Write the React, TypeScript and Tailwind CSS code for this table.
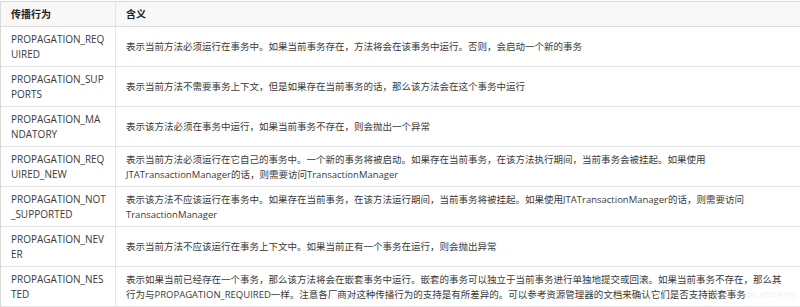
const rows: { name: string[]; desc: string[] }[] = [
    {
        name: ["PROPAGATION_REQ", "UIRED"],
        desc: ["表示当前方法必须运行在事务中。如果当前事务存在，方法将会在该事务中运行。否则，会启动一个新的事务"],
    },
    {
        name: ["PROPAGATION_SUP", "PORTS"],
        desc: ["表示当前方法不需要事务上下文，但是如果存在当前事务的话，那么该方法会在这个事务中运行"],
    },
    {
        name: ["PROPAGATION_MA", "NDATORY"],
        desc: ["表示该方法必须在事务中运行，如果当前事务不存在，则会抛出一个异常"],
    },
    {
        name: ["PROPAGATION_REQ", "UIRED_NEW"],
        desc: [
            "表示当前方法必须运行在它自己的事务中。一个新的事务将被启动。如果存在当前事务，在该方法执行期间，当前事务会被挂起。如果使用",
            "JTATransactionManager的话，则需要访问TransactionManager",
        ],
    },
    {
        name: ["PROPAGATION_NOT", "_SUPPORTED"],
        desc: [
            "表示该方法不应该运行在事务中。如果存在当前事务，在该方法运行期间，当前事务将被挂起。如果使用JTATransactionManager的话，则需要访问",
            "TransactionManager",
        ],
    },
    {
        name: ["PROPAGATION_NEV", "ER"],
        desc: ["表示当前方法不应该运行在事务上下文中。如果当前正有一个事务在运行，则会抛出异常"],
    },
    {
        name: ["PROPAGATION_NES", "TED"],
        desc: [
            "表示如果当前已经存在一个事务，那么该方法将会在嵌套事务中运行。嵌套的事务可以独立于当前事务进行单独地提交或回滚。如果当前事务不存在，那么其",
            "行为与PROPAGATION_REQUIRED一样。注意各厂商对这种传播行为的支持是有所差异的。可以参考资源管理器的文档来确认它们是否支持嵌套事务",
        ],
    },
];

export default function App() {
    return (
        <div
            className="relative w-[800px] h-[307px] bg-white text-[#3a3a3a] overflow-hidden"
            style={{ fontFamily: '"Open Sans", "Noto Sans CJK SC", sans-serif' }}
        >
            <div className="mt-px border-t border-l border-[#d9d9d9] text-[9.5px] leading-[15px]">
                <div className="grid grid-cols-[115px_1fr] h-[25px] bg-[#f8f8f8] border-b border-[#dcdcdc] font-bold text-[#222]">
                    <div className="flex items-center pl-[10px] border-r border-[#e6e6e6] text-[10px]">传播行为</div>
                    <div className="flex items-center pl-[10px] text-[10px]">含义</div>
                </div>
                {rows.map((row) => (
                    <div
                        key={row.name.join("")}
                        className="grid grid-cols-[115px_1fr] h-[40px] border-b border-[#e3e3e3]"
                    >
                        <div className="flex flex-col justify-center pl-[10px] border-r border-[#e6e6e6] whitespace-nowrap text-[10px]">
                            {row.name.map((line) => (
                                <span key={line}>{line}</span>
                            ))}
                        </div>
                        <div className="flex flex-col justify-center pl-[10px] whitespace-nowrap">
                            {row.desc.map((line) => (
                                <span key={line}>{line}</span>
                            ))}
                        </div>
                    </div>
                ))}
            </div>
            <span className="absolute right-[4px] bottom-[7px] text-[8px] text-[#f0f0f0]">
                qq_45264790
            </span>
        </div>
    );
}
